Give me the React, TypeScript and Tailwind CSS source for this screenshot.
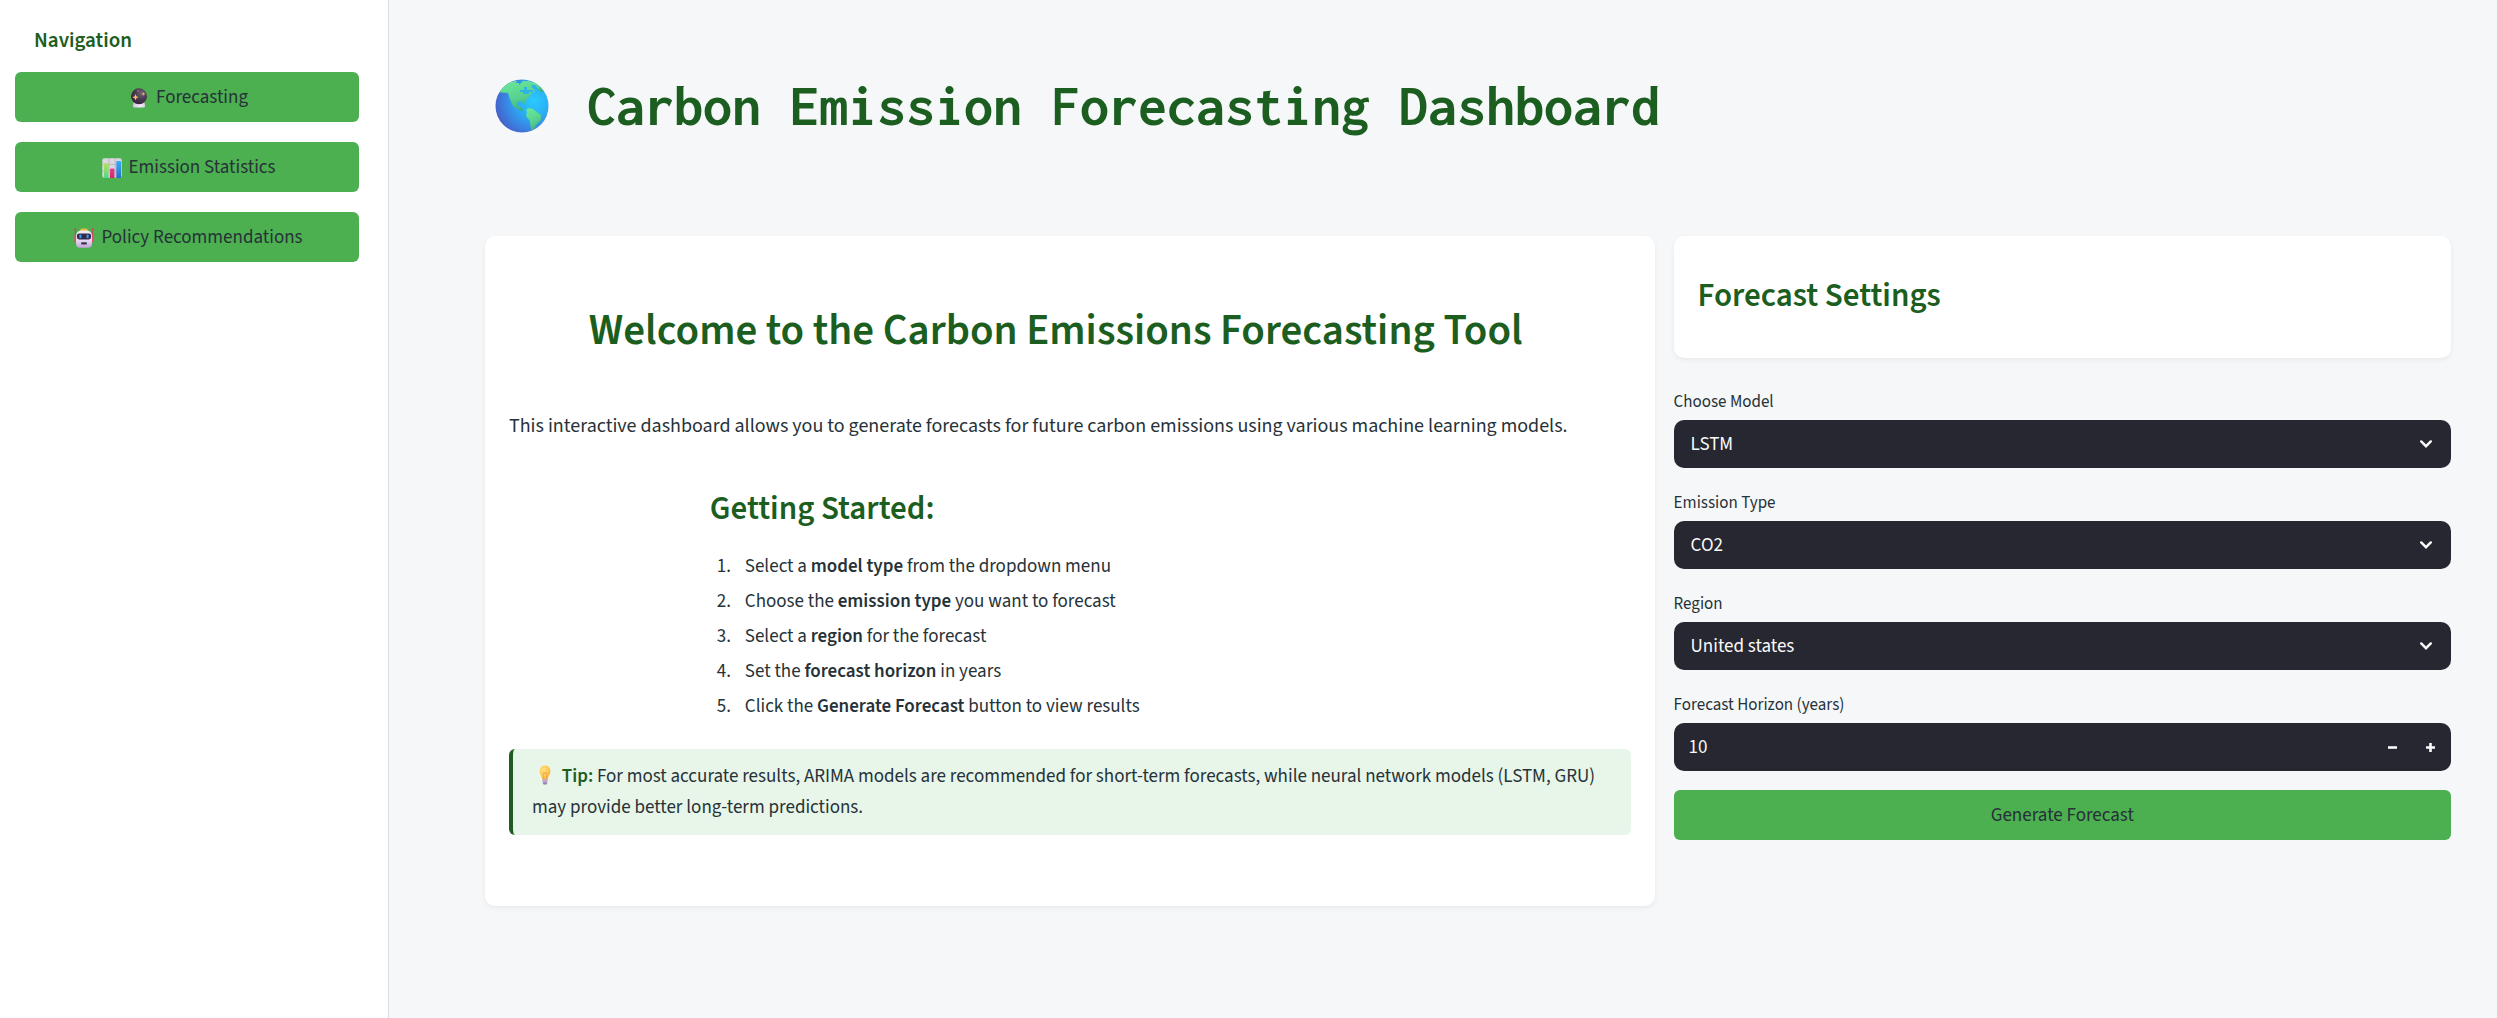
import { useState, type ReactNode } from "react";
import clsx from "clsx";

function Globe({ className }: { className?: string }) {
  return (
    <svg viewBox="0 0 54 54" className={className} aria-hidden="true">
      <defs>
        <radialGradient id="globe-sea" cx="0.72" cy="0.4" r="0.8">
          <stop offset="0" stopColor="#2acbff" />
          <stop offset="0.35" stopColor="#2ab0f5" />
          <stop offset="0.7" stopColor="#3a80e0" />
          <stop offset="1" stopColor="#4a55c0" />
        </radialGradient>
        <linearGradient id="globe-land" x1="0.2" y1="0" x2="0.6" y2="1">
          <stop offset="0" stopColor="#6ce99a" />
          <stop offset="0.6" stopColor="#57d190" />
          <stop offset="1" stopColor="#3cae7c" />
        </linearGradient>
        <clipPath id="globe-clip">
          <circle cx="27" cy="27" r="26.5" />
        </clipPath>
      </defs>
      <circle cx="27" cy="27" r="26.5" fill="url(#globe-sea)" />
      <g clipPath="url(#globe-clip)" fill="url(#globe-land)">
        <path d="M2 13 L9 7 L15 3 L22 2 L21 4 L24 4 L24 6 L28 2 L34 2 L40 5 L36 7 L39 10 L40 12 L37 14 L34 18 L31 21 L29 26 L26 22 L22 23 L23 27 L27 29 L29 32 L27 32 L22 30 L18 27 L15 20 L13 14 Z" />
        <path d="M35 3 L41 4 L46 8 L49 13 L44 12 L41 7 Z" />
        <path d="M31 31 L34 29 L38 30 L42 33 L46 36 L46 41 L42 45 L38 51 L36 52 L35 42 L31 37 L32 33 Z" />
      </g>
      <path d="M25 11 h4 v-3 h3 v3 h6 v2 h-4 v2 h-6 v-2 h-3 Z" fill="#2cb4e4" />
    </svg>
  );
}

function CrystalBall() {
  return (
    <svg viewBox="0 0 20 20" className="size-5" aria-hidden="true">
      <defs>
        <radialGradient id="ball-glass" cx="0.65" cy="0.3" r="0.75">
          <stop offset="0" stopColor="#6f6478" />
          <stop offset="0.5" stopColor="#493a52" />
          <stop offset="1" stopColor="#36203f" />
        </radialGradient>
        <linearGradient id="ball-base" x1="0" x2="1">
          <stop offset="0" stopColor="#d7b9ea" />
          <stop offset="0.6" stopColor="#f3ecf8" />
          <stop offset="1" stopColor="#d9cfe2" />
        </linearGradient>
      </defs>
      <path d="M4.5 14 h11 v1.6 l0.7 2.2 q0 1.7 -1.6 1.7 h-9.2 q-1.6 0 -1.6 -1.7 l0.7 -2.2 Z" fill="url(#ball-base)" />
      <circle cx="10" cy="8.3" r="8" fill="url(#ball-glass)" />
      <path d="M6.5 6.4 l0.7 2.1 2 0.7 -2 0.7 -0.7 2.2 -0.7 -2.2 -2 -0.7 2 -0.7 Z" fill="#ffc266" stroke="#ffc266" strokeWidth="0.4" />
      <path d="M14.4 4.4 l0.4 1.1 1.1 0.4 -1.1 0.4 -0.4 1.1 -0.4 -1.1 -1.1 -0.4 1.1 -0.4 Z" fill="#ffb95c" stroke="#ffb95c" strokeWidth="0.4" />
      <circle cx="9" cy="3" r="0.7" fill="#f0a04f" />
    </svg>
  );
}

function BarChartIcon() {
  return (
    <svg viewBox="0 0 20 20" className="size-5" aria-hidden="true">
      <defs>
        <linearGradient id="bar-green" x1="0" y1="0" x2="0" y2="1">
          <stop offset="0" stopColor="#b4e34f" />
          <stop offset="1" stopColor="#4fd88f" />
        </linearGradient>
        <linearGradient id="bar-red" x1="0" y1="0" x2="0" y2="1">
          <stop offset="0" stopColor="#e33e8c" />
          <stop offset="1" stopColor="#d3246a" />
        </linearGradient>
        <linearGradient id="bar-blue" x1="0" y1="0" x2="0" y2="1">
          <stop offset="0" stopColor="#38aef5" />
          <stop offset="1" stopColor="#2a6fc9" />
        </linearGradient>
      </defs>
      <rect x="0.3" y="0.3" width="19.4" height="19.4" rx="2" fill="#dcd6e0" />
      <path d="M0.3 6.5 h19.4 M0.3 13 h19.4 M7 0.3 v19.4 M13.2 0.3 v19.4" stroke="#b9aec2" strokeWidth="0.8" />
      <path d="M2 20 V6.2 q0 -1 1 -1 h2.6 q1 0 1 1 V20 Z" fill="url(#bar-green)" />
      <path d="M8 20 V11.5 q0 -1 1 -1 h2.4 q1 0 1 1 V20 Z" fill="url(#bar-red)" />
      <path d="M14.3 20 V4 q0 -1 1 -1 h2.7 q1 0 1 1 V20 Z" fill="url(#bar-blue)" />
    </svg>
  );
}

function Robot() {
  return (
    <svg viewBox="0 0 20 20" className="size-5" aria-hidden="true">
      <defs>
        <linearGradient id="robot-face" x1="0" y1="0" x2="0" y2="1">
          <stop offset="0" stopColor="#f3edf7" />
          <stop offset="0.6" stopColor="#e3d6ee" />
          <stop offset="1" stopColor="#c2a1dd" />
        </linearGradient>
      </defs>
      <path d="M1.3 1.5 V9 M18.7 1.5 V9" stroke="#d93a68" strokeWidth="0.9" />
      <circle cx="1.3" cy="1.2" r="1" fill="#e8365f" />
      <circle cx="18.7" cy="1.2" r="1" fill="#e8365f" />
      <rect x="0.4" y="6.5" width="2.6" height="8" rx="1.2" fill="#e34a78" />
      <rect x="17" y="6.5" width="2.6" height="8" rx="1.2" fill="#e34a78" />
      <rect x="6.3" y="0.5" width="7.4" height="3.5" rx="1.5" fill="#e9b93c" />
      <path d="M6.5 2.5 h7 q4.5 1 4.5 6 v7 q0 4.2 -4.2 4.2 h-7.6 q-4.2 0 -4.2 -4.2 v-7 q0 -5 4.5 -6 Z" fill="url(#robot-face)" />
      <rect x="2.9" y="5.4" width="14.2" height="6" rx="2.4" fill="#35294a" />
      <rect x="5.3" y="6.6" width="2.2" height="3.6" rx="1" fill="#2f9fe6" />
      <rect x="12.5" y="6.6" width="2.2" height="3.6" rx="1" fill="#2f9fe6" />
      <rect x="7.2" y="14.3" width="5.6" height="2.1" rx="0.5" fill="#3e3150" />
    </svg>
  );
}

function Bulb() {
  return (
    <svg viewBox="0 0 20 20" className="inline-block size-5 align-[-3px]" aria-hidden="true">
      <defs>
        <radialGradient id="bulb-glass" cx="0.35" cy="0.35" r="0.75">
          <stop offset="0" stopColor="#ffe08a" />
          <stop offset="0.6" stopColor="#ffc94f" />
          <stop offset="1" stopColor="#f5a83c" />
        </radialGradient>
      </defs>
      <path d="M10 0.5 C6.4 0.5 4.6 3.2 4.6 6.6 C4.6 9.8 6.9 11 7.4 14.6 H12.6 C13.1 11 15.4 9.8 15.4 6.6 C15.4 3.2 13.6 0.5 10 0.5 Z" fill="url(#bulb-glass)" />
      <path d="M8.4 14 V9.8 q-1.4 -1.6 0 -2.4 q1.6 0.2 1.6 1.6 q0 -1.4 1.6 -1.6 q1.4 0.8 0 2.4 V14" fill="none" stroke="#ef9d3c" strokeWidth="0.8" />
      <rect x="7.3" y="14.4" width="5.4" height="2.4" rx="0.8" fill="#a88cba" />
      <rect x="7.8" y="17" width="4.4" height="2.4" rx="1.1" fill="#94729f" />
      <path d="M7.4 15.6 h5.2 M7.9 17.9 h4.2" stroke="#d6c0e2" strokeWidth="0.6" />
    </svg>
  );
}

function GreenButton({ children }: { children: ReactNode }) {
  return (
    <button
      type="button"
      className="flex h-[50px] w-full items-center justify-center gap-1 rounded-md bg-[#4caf50] pt-0.5 text-[19px] leading-6 text-[#263238]"
    >
      {children}
    </button>
  );
}

function NavButton({ icon, label }: { icon: ReactNode; label: string }) {
  return (
    <GreenButton>
      <span className="flex w-[26px] justify-center">{icon}</span>
      <span>{label}</span>
    </GreenButton>
  );
}

const labelClass = "mb-1.5 block text-[17px] leading-6";

function SelectField({ id, label, options }: { id: string; label: string; options: string[] }) {
  return (
    <div>
      <label htmlFor={id} className={labelClass}>
        {label}
      </label>
      <div className="relative">
        <select
          id={id}
          className="h-12 w-full appearance-none rounded-[10px] bg-[#262730] pt-0.5 pr-12 pl-[17px] text-[19px] text-[#fafafa]"
        >
          {options.map((option) => (
            <option key={option}>{option}</option>
          ))}
        </select>
        <svg
          viewBox="0 0 12 8"
          className="pointer-events-none absolute top-5 right-[19px] h-2 w-3"
          fill="none"
          stroke="#fafafa"
          strokeWidth="2.4"
          aria-hidden="true"
        >
          <path d="M1.2 1.4 L6 6.2 L10.8 1.4" strokeLinecap="round" />
        </svg>
      </div>
    </div>
  );
}

function HorizonField() {
  const [years, setYears] = useState(10);
  return (
    <div>
      <label htmlFor="horizon" className={labelClass}>
        Forecast Horizon (years)
      </label>
      <div className="flex h-12 rounded-[10px] bg-[#262730] pr-px text-[#fafafa]">
        <input
          id="horizon"
          type="number"
          min={1}
          value={years}
          onChange={(event) => setYears(Number(event.target.value))}
          className="min-w-0 flex-1 bg-transparent pt-0.5 pl-[15px] text-[19px] [appearance:textfield] [&::-webkit-inner-spin-button]:appearance-none"
        />
        <StepButton label="Decrease" path="M0 4.5 H9" onClick={() => setYears(Math.max(1, years - 1))} />
        <StepButton label="Increase" path="M0 4.5 H9 M4.5 0 V9" onClick={() => setYears(years + 1)} />
      </div>
    </div>
  );
}

function StepButton({ label, path, onClick }: { label: string; path: string; onClick: () => void }) {
  return (
    <button type="button" aria-label={label} onClick={onClick} className="flex w-[38px] items-center justify-center">
      <svg viewBox="0 0 9 9" className="size-[9px]" stroke="currentColor" strokeWidth="2.6" fill="none">
        <path d={path} />
      </svg>
    </button>
  );
}

function Card({ className, children }: { className: string; children: ReactNode }) {
  return (
    <section className={clsx("rounded-[10px] bg-white px-6 shadow-[0_2px_5px_rgba(0,0,0,0.06)]", className)}>
      {children}
    </section>
  );
}

const steps: [string, string, string][] = [
  ["Select a ", "model type", " from the dropdown menu"],
  ["Choose the ", "emission type", " you want to forecast"],
  ["Select a ", "region", " for the forecast"],
  ["Set the ", "forecast horizon", " in years"],
  ["Click the ", "Generate Forecast", " button to view results"],
];

export default function App() {
  return (
    <div className="flex min-h-screen bg-[#f5f7f9] font-['Source_Sans_3','Noto_Sans_CJK_SC',sans-serif] text-[#263238]">
      <aside className="w-[389px] shrink-0 border-r border-[#dddddd] bg-white pt-6 pr-[29px] pl-[15px]">
        <h2 className="mb-4 pl-[19px] text-[21px] leading-8 font-semibold text-[#1b5e20]">Navigation</h2>
        <nav className="flex flex-col gap-5">
          <NavButton icon={<CrystalBall />} label="Forecasting" />
          <NavButton icon={<BarChartIcon />} label="Emission Statistics" />
          <NavButton icon={<Robot />} label="Policy Recommendations" />
        </nav>
      </aside>

      <main className="min-w-0 flex-1 pt-[66px] pr-[46px] pb-16 pl-24">
        <h1 className="mb-[90px] flex items-center gap-[38px] pl-2.5 font-['Inconsolata','DejaVu_Sans_Mono',monospace] text-[58px] leading-20 font-bold text-[#1b5e20]">
          <Globe className="size-[54px] shrink-0" />
          Carbon Emission Forecasting Dashboard
        </h1>

        <div className="grid grid-cols-[calc(60%-10px)_calc(40%-9px)] items-start gap-[19px]">
          <Card className="pt-[69px] pb-[71px]">
            <h2 className="pr-7 text-center text-[43px] leading-[52px] font-semibold text-[#1b5e20]">
              Welcome to the Carbon Emissions Forecasting Tool
            </h2>
            <p className="mt-[53px] text-[20px] leading-8">
              This interactive dashboard allows you to generate forecasts for future carbon emissions using various
              machine learning models.
            </p>
            <div className="mx-auto mt-[47px] max-w-[720px]">
              <h3 className="text-[33px] leading-10 font-semibold text-[#1b5e20]">Getting Started:</h3>
              <ol className="mt-[22px] flex list-decimal flex-col gap-1 pl-[25px] text-[19px] leading-[31px]">
                {steps.map(([before, strong, after]) => (
                  <li key={strong} className="pl-2.5">
                    {before}
                    <strong className="font-semibold">{strong}</strong>
                    {after}
                  </li>
                ))}
              </ol>
            </div>
            <p className="mt-[27px] rounded-md border-l-4 border-[#1b5e20] bg-[#e8f5e9] px-[19px] py-3 text-[19px] leading-[31px]">
              <span className="inline-block w-[26px] text-center">
                <Bulb />
              </span>{" "}
              <strong className="font-semibold text-[#1b5e20]">Tip:</strong> For most accurate results, ARIMA models are
              recommended for short-term forecasts, while neural network models (LSTM, GRU) may provide better long-term
              predictions.
            </p>
          </Card>

          <div>
            <Card className="pt-10 pb-[42px]">
              <h2 className="text-[33px] leading-10 font-semibold text-[#1b5e20]">Forecast Settings</h2>
            </Card>
            <form className="mt-8 flex flex-col gap-[23px]">
              <SelectField id="model" label="Choose Model" options={["LSTM", "GRU", "ARIMA"]} />
              <SelectField id="emission" label="Emission Type" options={["CO2"]} />
              <SelectField id="region" label="Region" options={["United states"]} />
              <HorizonField />
            </form>
            <div className="mt-[19px]">
              <GreenButton>Generate Forecast</GreenButton>
            </div>
          </div>
        </div>
      </main>
    </div>
  );
}
